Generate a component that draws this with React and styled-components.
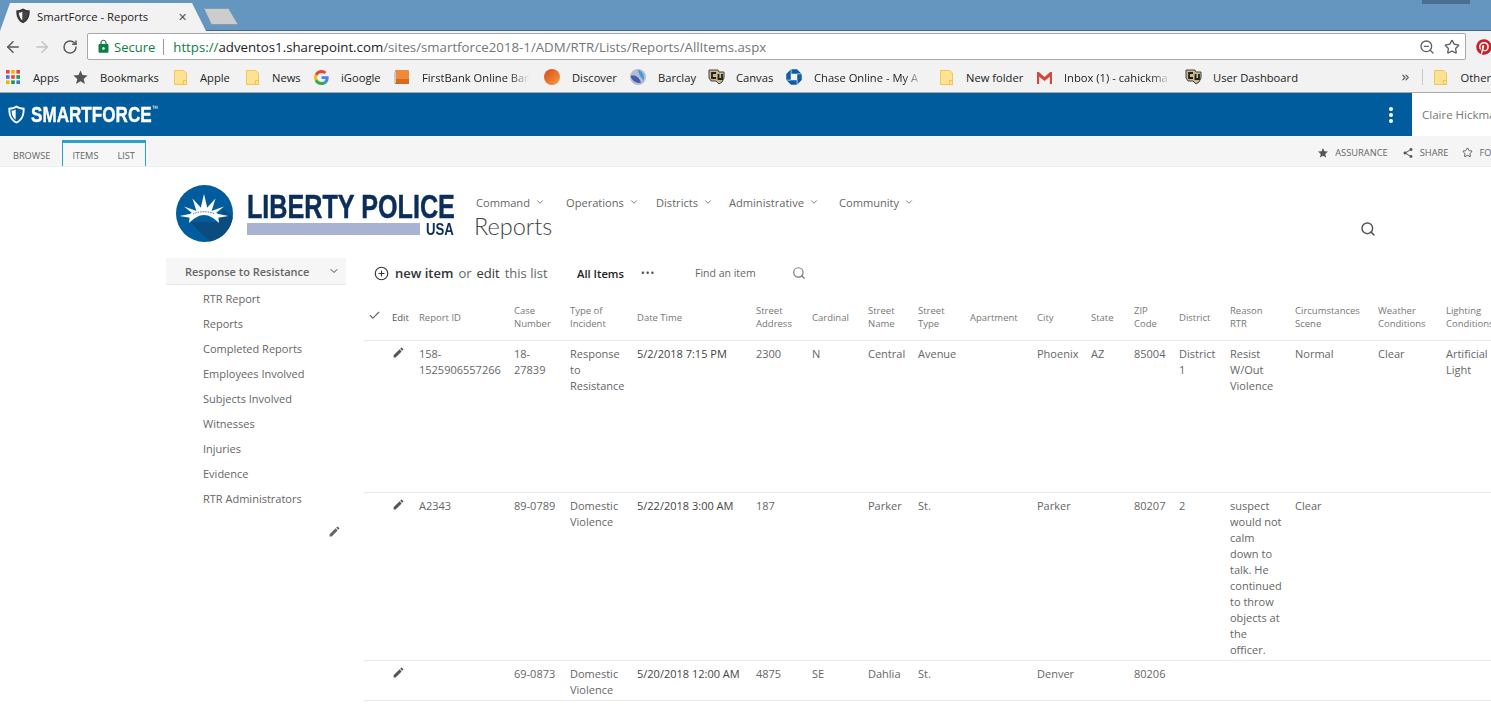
import React from "react";
import styled, { createGlobalStyle } from "styled-components";
import { ArrowLeft, ArrowRight, RotateCw, ZoomOut, Star, Search, Check, CirclePlus, ChevronDown, ChevronsRight } from "lucide-react";
import { MdEdit, MdShare, MdStar, MdLock } from "react-icons/md";
import { FaPinterest } from "react-icons/fa";

const UI_FONT = `"Open Sans", "Noto Sans", sans-serif`;

const Global = createGlobalStyle`
  html, body { margin: 0; padding: 0; background: #fff; }
  body { font-family: ${UI_FONT}; overflow: hidden; }
  * { box-sizing: border-box; }
  svg { flex: none; }
`;

const ShieldIcon = ({ size = 15, color = "#333", inner = "#fff", half = "#fff" }) => (
  <svg width={size} height={size * 1.12} viewBox="0 0 20 22">
    <path d="M10 .5 C13 2.500 16 3 19.500 3 C20 12 17 18.500 10 21.500 C3 18.500 0 12 .5 3 C4 3 7 2.500 10 .5 Z" fill={color} />
    <path d="M10 3 C7.500 4.500 5 5 2.700 5.200 C2.500 12 5 17 10 19.300 C15 17 17.500 12 17.300 5.200 C15 5 12.500 4.500 10 3 Z" fill={inner} />
    <path d="M9 5 C7.500 6 5.800 6.500 4.200 6.700 C4.200 11 6 15.500 9 17.300 Z" fill={half} />
  </svg>
);

const AppsIcon = () => (
  <svg width="14" height="14" viewBox="0 0 14 14">
    {["#e8453c", "#f4b400", "#e8453c", "#3c78d8", "#e8453c", "#0f9d58", "#f4b400", "#0f9d58", "#3c78d8"].map((c, i) => (
      <rect key={i} x={(i % 3) * 5.2} y={Math.floor(i / 3) * 5.2} width="3.6" height="3.6" fill={c} />
    ))}
  </svg>
);

const FolderIcon = () => (
  <svg width="13" height="15" viewBox="0 0 13 15">
    <path d="M.5.5 H9.500 L12.500 3 V14.500 H.5 Z" fill="#fde293" stroke="#f0c654" />
    <rect x="9.500" y="10.500" width="3" height="4" fill="#fde293" stroke="#f0c654" />
  </svg>
);

const GoogleIcon = () => (
  <svg width="15" height="15" viewBox="0 0 48 48">
    <path fill="#EA4335" d="M24 9.500c3.500 0 6.700 1.300 9.100 3.500l6.800-6.800C35.800 2.400 30.300 0 24 0 14.600 0 6.500 5.400 2.600 13.200l7.900 6.200C12.400 13.600 17.700 9.500 24 9.500z" />
    <path fill="#4285F4" d="M46.900 24.500c0-1.600-.2-3.100-.4-4.500H24v9h12.900c-.6 3-2.200 5.500-4.700 7.200l7.600 5.900c4.400-4.100 7.100-10.200 7.100-17.600z" />
    <path fill="#FBBC05" d="M10.500 28.600c-.5-1.500-.8-3-.8-4.600s.3-3.100.8-4.600l-7.900-6.200C.9 16.500 0 20.100 0 24s.9 7.500 2.600 10.800l7.900-6.200z" />
    <path fill="#34A853" d="M24 48c6.500 0 11.900-2.100 15.900-5.800l-7.600-5.900c-2.200 1.400-5 2.300-8.300 2.300-6.300 0-11.600-4.100-13.500-9.900l-7.900 6.200C6.500 42.600 14.600 48 24 48z" />
  </svg>
);

const OrangeBox = () => (
  <svg width="16" height="15" viewBox="0 0 16 15">
    <rect x="1" y="0" width="14" height="14" rx="1" fill="#f08a38" />
    <rect x="1" y="9" width="14" height="5" fill="#d86a20" />
    <rect x="0" y="2" width="2" height="11" fill="#c9c9c9" />
  </svg>
);

const DiscoverIcon = () => (
  <svg width="16" height="16" viewBox="0 0 16 16">
    <defs>
      <linearGradient id="disc" x1="0" y1="0" x2="1" y2="1">
        <stop offset="0" stopColor="#d8491c" />
        <stop offset="1" stopColor="#f6a03a" />
      </linearGradient>
    </defs>
    <circle cx="8" cy="8" r="8" fill="url(#disc)" />
  </svg>
);

const BarclayIcon = () => (
  <svg width="16" height="16" viewBox="0 0 16 16">
    <circle cx="8" cy="8" r="8" fill="#b9b9d2" />
    <path d="M.5 7 C5 5.500 9 8 11 13.500 C7 15 2 12 .5 7 Z" fill="#3f5fa8" />
    <path d="M8 .5 C12 2 15 6 13.500 11.500 C11 9 8.500 5 8 .5 Z" fill="#3aa0dc" />
  </svg>
);

const BuffaloIcon = () => (
  <svg width="17" height="16" viewBox="0 0 17 16">
    <path d="M1 1 H10 L11 3 H16 V9 L14 13 L11 15 L8 12 H3 L1 9 Z" fill="#c9b98a" stroke="#444" strokeWidth="1" />
    <path d="M8 4 H4 V9 H8 M10.500 5 V10 H14 V5" fill="none" stroke="#222" strokeWidth="1.800" />
  </svg>
);

const ChaseIcon = () => (
  <svg width="16" height="16" viewBox="0 0 16 16" fill="#0f5cab" stroke="#f2f2f2" strokeWidth=".5">
    <path d="M5 0 H11 L16 5 H5 Z" />
    <path d="M16 5 V11 L11 16 V5 Z" />
    <path d="M11 16 H5 L0 11 H11 Z" />
    <path d="M0 11 V5 L5 0 V11 Z" />
  </svg>
);

const GmailIcon = () => (
  <svg width="15" height="13" viewBox="0 0 15 13">
    <path d="M2.500 5 V13 H0 V1 Z M12.500 5 V13 H15 V1 Z" fill="#c9c9c9" />
    <path d="M0 1 H1.800 L7.500 6 L13.200 1 H15 V4 L7.500 10 L0 4 Z" fill="#d5473a" />
    <path d="M0 1 V13 H2 V3 Z M15 1 V13 H13 V3 Z" fill="#d5473a" />
  </svg>
);

const LibertyMark = () => (
  <svg width="57" height="57" viewBox="0 0 57 57">
    <circle cx="28.500" cy="28.500" r="28.500" fill="#005c9c" />
    <path d="M14 37 L34 56.400 A28.500 28.500 0 0 0 56.800 32 L47 24 L42 37 Z" fill="#0b4c7e" />
    <g fill="#fff">
      <path d="M28 9 L32 26 H24 Z" />
      <path d="M16.500 13.500 L27 25 L21 28 Z" />
      <path d="M39.500 13.500 L29 25 L35 28 Z" />
      <path d="M8 21.500 L22 26.500 L18.500 30 Z" />
      <path d="M48 21.500 L34 26.500 L37.500 30 Z" />
      <path d="M3.500 31 L16 28.500 L15.500 33 Z" />
      <path d="M52.500 31 L40 28.500 L40.500 33 Z" />
      <path d="M14 29 C21 24 35 24 42 29 L43 38 C38 33 33 30 28 30 C23 30 18 33 13 38 Z" />
    </g>
    <path d="M17 29 C23 26 33 26 39 29" fill="none" stroke="#005c9c" strokeWidth=".8" strokeDasharray="1.500 1" />
  </svg>
);

const bookmarks = [
  { icon: <AppsIcon />, label: "Apps", w: 27 },
  { icon: <MdStar size={17} color="#555" />, label: "Bookmarks", w: 60 },
  { icon: <FolderIcon />, label: "Apple", w: 32 },
  { icon: <FolderIcon />, label: "News", w: 29 },
  { icon: <GoogleIcon />, label: "iGoogle", w: 41 },
  { icon: <OrangeBox />, label: "FirstBank Online Ban", w: 110, fade: true },
  { icon: <DiscoverIcon />, label: "Discover", w: 46 },
  { icon: <BarclayIcon />, label: "Barclay", w: 38 },
  { icon: <BuffaloIcon />, label: "Canvas", w: 38 },
  { icon: <ChaseIcon />, label: "Chase Online - My A", w: 112, fade: true },
  { icon: <FolderIcon />, label: "New folder", w: 58 },
  { icon: <GmailIcon />, label: "Inbox (1) - cahickma", w: 109, fade: true },
  { icon: <BuffaloIcon />, label: "User Dashboard", w: 86 },
];

const navLinks = [
  { label: "Command", w: 90 },
  { label: "Operations", w: 90 },
  { label: "Districts", w: 73 },
  { label: "Administrative", w: 110 },
  { label: "Community" },
];
const sideLinks = ["RTR Report", "Reports", "Completed Reports", "Employees Involved", "Subjects Involved", "Witnesses", "Injuries", "Evidence", "RTR Administrators"];

const columns = [
  { w: 24 },
  { w: 27, title: "Edit", dark: true },
  { w: 95, title: "Report ID" },
  { w: 56, title: "Case Number" },
  { w: 67, title: "Type of Incident" },
  { w: 119, title: "Date Time" },
  { w: 56, title: "Street Address" },
  { w: 56, title: "Cardinal" },
  { w: 50, title: "Street Name" },
  { w: 52, title: "Street Type" },
  { w: 67, title: "Apartment" },
  { w: 54, title: "City" },
  { w: 43, title: "State" },
  { w: 45, title: "ZIP Code" },
  { w: 51, title: "District" },
  { w: 65, title: "Reason\nRTR" },
  { w: 83, title: "Circumstances Scene" },
  { w: 68, title: "Weather Conditions" },
  { w: 68, title: "Lighting Conditions" },
];

const rows = [
  { h: 152, cells: ["158-1525906557266", "18-27839", "Response to Resistance", "5/2/2018 7:15 PM", "2300", "N", "Central", "Avenue", "", "Phoenix", "AZ", "85004", "District 1", "Resist W/Out Violence", "Normal", "Clear", "Artificial Light"] },
  { h: 168, cells: ["A2343", "89-0789", "Domestic Violence", "5/22/2018 3:00 AM", "187", "", "Parker", "St.", "", "Parker", "", "80207", "2", "suspect would not calm down to talk. He continued to throw objects at the officer.", "Clear", "", ""] },
  { h: 40, cells: ["", "69-0873", "Domestic Violence", "5/20/2018 12:00 AM", "4875", "SE", "Dahlia", "St.", "", "Denver", "", "80206", "", "", "", "", ""] },
];

export default function App() {
  return (
    <Page>
      <Global />
      <TabStrip>
        <ActiveTab>
          <ShieldIcon size={14} color="#333" inner="#444" half="#f2f2f2" />
          <TabTitle>SmartForce - Reports</TabTitle>
          <TabClose>✕</TabClose>
        </ActiveTab>
        <NewTab />
        <WindowButton />
      </TabStrip>

      <Toolbar>
        <ArrowLeft size={18} color="#5a5a5a" strokeWidth={2} />
        <ArrowRight size={18} color="#c4c4c4" strokeWidth={2} />
        <RotateCw size={16} color="#5a5a5a" strokeWidth={2.2} />
        <Omnibox>
          <MdLock size={15} color="#0b8043" />
          <SecureLabel>Secure</SecureLabel>
          <UrlDivider />
          <Url>
            <UrlScheme>https://</UrlScheme>
            <UrlHost>adventos1.sharepoint.com</UrlHost>
            /sites/smartforce2018-1/ADM/RTR/Lists/Reports/AllItems.aspx
          </Url>
          <OmniIcons>
            <ZoomOut size={16} color="#5f5f5f" />
            <Star size={16} color="#5f5f5f" />
          </OmniIcons>
        </Omnibox>
        <FaPinterest size={16} color="#cb2027" />
      </Toolbar>

      <BookmarksBar>
        {bookmarks.map((b) => (
          <Bookmark key={b.label}>
            <BookmarkIcon>{b.icon}</BookmarkIcon>
            <BookmarkLabel $w={b.w} $fade={b.fade}>{b.label}</BookmarkLabel>
          </Bookmark>
        ))}
        <BookmarksEnd>
          <ChevronsRight size={11} color="#555" strokeWidth={2.500} />
          <BarDivider />
          <Bookmark>
            <BookmarkIcon><FolderIcon /></BookmarkIcon>
            <BookmarkLabel>Other</BookmarkLabel>
          </Bookmark>
        </BookmarksEnd>
      </BookmarksBar>

      <SuiteBar>
        <Brand>
          <ShieldIcon size={17} color="#fff" inner="#005c9c" half="#fff" />
          <BrandName>SMARTFORCE<sup>™</sup></BrandName>
        </Brand>
        <Kebab>
          <i /><i /><i />
        </Kebab>
        <UserBox>Claire Hickman</UserBox>
      </SuiteBar>

      <Ribbon>
        <RibbonTab>BROWSE</RibbonTab>
        <RibbonGroup>
          <RibbonTab $inGroup>ITEMS</RibbonTab>
          <RibbonTab $inGroup>LIST</RibbonTab>
        </RibbonGroup>
        <RibbonActions>
          <RibbonAction><MdStar size={12} />ASSURANCE</RibbonAction>
          <RibbonAction><MdShare size={12} />SHARE</RibbonAction>
          <RibbonAction><Star size={11} />FOLLOW</RibbonAction>
        </RibbonActions>
      </Ribbon>

      <SiteHeader>
        <Logo>
          <LibertyMark />
          <LogoWords>
            <LogoName>LIBERTY POLICE</LogoName>
            <LogoUnder>
              <LogoBar />
              <LogoUsa>USA</LogoUsa>
            </LogoUnder>
          </LogoWords>
        </Logo>
        <HeaderText>
          <TopNav>
            {navLinks.map((n) => (
              <TopNavLink key={n.label} $w={n.w}>{n.label}<ChevronDown size={10} /></TopNavLink>
            ))}
          </TopNav>
          <PageTitle>Reports</PageTitle>
        </HeaderText>
        <HeaderSearch><Search size={16} strokeWidth={2.2} /></HeaderSearch>
      </SiteHeader>

      <Body>
        <SideNav>
          <SideHeading>Response to Resistance<ChevronDown size={12} /></SideHeading>
          {sideLinks.map((s) => <SideLink key={s}>{s}</SideLink>)}
          <SideEdit><MdEdit size={13} /></SideEdit>
        </SideNav>

        <Main>
          <ListToolbar>
            <NewItem>
              <CirclePlus size={15} strokeWidth={1.8} color="#333" />
              <strong>new item</strong> <span>or</span> <b>edit</b> <span>this list</span>
            </NewItem>
            <ViewName>All Items</ViewName>
            <Dots>•••</Dots>
            <FindLabel>Find an item</FindLabel>
            <Search size={14} color="#777" />
          </ListToolbar>

          <ListTable>
            <colgroup>
              {columns.map((c, i) => <col key={i} width={c.w} />)}
            </colgroup>
            <thead>
              <tr>
                {columns.map((c, i) => (
                  <HeadCell key={i} $dark={c.dark}>
                    {i === 0 ? <Check size={13} color="#666" /> : c.title}
                  </HeadCell>
                ))}
              </tr>
            </thead>
            <tbody>
              {rows.map((r, ri) => (
                <Row key={ri} $h={r.h}>
                  <Cell />
                  <Cell><MdEdit size={13} color="#555" /></Cell>
                  {r.cells.map((c, ci) => <Cell key={ci} $dark={ci === 3}>{c}</Cell>)}
                </Row>
              ))}
            </tbody>
          </ListTable>
        </Main>
      </Body>
    </Page>
  );
}

const Page = styled.div`
  width: 1491px;
  height: 711px;
  overflow: hidden;
  background: #fff;
`;

const TabStrip = styled.div`
  height: 31px;
  background: #6596bf;
  border-bottom: 1px solid #45688a;
  display: flex;
  align-items: flex-end;
  position: relative;
`;

const ActiveTab = styled.div`
  width: 206px;
  height: 28px;
  margin-bottom: -1px;
  background: #f2f2f2;
  clip-path: polygon(0 100%, 10px 0, 192px 0, 206px 100%);
  display: flex;
  align-items: center;
  padding: 0 0 2px 16px;
`;

const TabTitle = styled.span`
  font-size: 11.300px;
  color: #222;
  margin-left: 7px;
  width: 141px;
`;

const TabClose = styled.span`
  font-size: 11px;
  color: #555;
`;

const NewTab = styled.div`
  width: 34px;
  height: 17px;
  margin: 0 0 5px -2px;
  background: #cdcdcd;
  border: 1px solid #8b9aa8;
  clip-path: polygon(0 0, 24px 0, 100% 100%, 8px 100%);
`;

const WindowButton = styled.div`
  position: absolute;
  top: 0;
  left: 1422px;
  width: 48px;
  height: 4px;
  background: #4a6e90;
`;

const Toolbar = styled.div`
  height: 31px;
  background: #f2f2f2;
  display: flex;
  align-items: center;
  gap: 11px;
  padding: 0 0 0 4px;
`;

const Omnibox = styled.div`
  width: 1379px;
  flex: none;
  height: 27px;
  margin-left: -2px;
  margin-right: -1px;
  background: #fff;
  border: 1px solid #a9a9a9;
  border-radius: 2px;
  display: flex;
  align-items: center;
  padding-left: 8px;
`;

const SecureLabel = styled.span`
  font-size: 13px;
  color: #0b8043;
  margin-left: 3px;
`;

const UrlDivider = styled.span`
  width: 1px;
  height: 16px;
  background: #999;
  margin: 0 9px 0 8px;
`;

const Url = styled.span`
  font-size: 13.250px;
  color: #767676;
  flex: 1;
`;

const UrlScheme = styled.span`
  color: #0b8043;
`;

const UrlHost = styled.span`
  color: #222;
`;

const OmniIcons = styled.span`
  display: inline-flex;
  gap: 9px;
  margin-right: 5px;
`;

const BookmarksBar = styled.div`
  height: 31px;
  background: #f2f2f2;
  border-bottom: 1px solid #a8a8a8;
  display: flex;
  align-items: center;
  gap: 13px;
  padding-left: 6px;
`;

const Bookmark = styled.div`
  display: flex;
  align-items: center;
  gap: 13px;
`;

const BookmarkIcon = styled.span`
  width: 14px;
  flex: none;
  display: inline-flex;
  align-items: center;
  justify-content: center;
`;

const BookmarkLabel = styled.span`
  font-size: 11.200px;
  color: #222;
  white-space: nowrap;
  width: ${(p) => (p.$w ? `${p.$w}px` : "auto")};
  ${(p) => p.$fade && "mask-image: linear-gradient(to right, #000 80%, transparent 98%);"}
`;

const BookmarksEnd = styled.div`
  margin-left: auto;
  display: flex;
  align-items: center;
  gap: 11px;
`;

const BarDivider = styled.span`
  width: 1px;
  height: 16px;
  background: #c8c8c8;
`;

const SuiteBar = styled.div`
  height: 43px;
  background: #005c9c;
  display: flex;
  align-items: center;
  padding-left: 8px;
`;

const Brand = styled.div`
  display: flex;
  align-items: center;
  gap: 6px;
  flex: 1;
`;

const BrandName = styled.span`
  font-family: "Liberation Sans", sans-serif;
  font-weight: 700;
  font-size: 22.500px;
  color: #fff;
  display: inline-block;
  -webkit-text-stroke: 0.4px #fff;
  transform: scaleX(0.76);
  transform-origin: left center;
  sup {
    font-size: 8px;
    font-weight: 400;
    -webkit-text-stroke: 0;
    vertical-align: 11px;
    line-height: 0;
  }
`;

const Kebab = styled.div`
  width: 6px;
  margin-right: 18px;
  display: flex;
  flex-direction: column;
  align-items: center;
  gap: 2px;
  i {
    width: 4px;
    height: 4px;
    border-radius: 50%;
    background: #fff;
  }
`;

const UserBox = styled.div`
  width: 79px;
  height: 43px;
  background: #fff;
  color: #777;
  font-size: 11.500px;
  line-height: 43px;
  padding-left: 10px;
  white-space: nowrap;
  overflow: hidden;
`;

const Ribbon = styled.div`
  height: 31px;
  background: #f5f5f5;
  border-bottom: 1px solid #ececec;
  display: flex;
  align-items: flex-end;
  padding-left: 13px;
`;

const RibbonTab = styled.span`
  font-size: 9.200px;
  color: #666;
  height: 23px;
  line-height: 26px;
  margin-right: ${(p) => (p.$inGroup ? "1px" : "11px")};
  padding: ${(p) => (p.$inGroup ? "0 9px" : "0")};
`;

const RibbonGroup = styled.div`
  display: flex;
  height: 26px;
  margin-left: 1px;
  border: 1px solid #29a2cc;
  border-top-width: 3px;
  border-bottom: none;
  background: #f7f7f7;
`;

const RibbonActions = styled.div`
  margin-left: auto;
  display: flex;
  align-items: center;
  gap: 14px;
  height: 100%;
  padding-top: 3px;
  margin-right: -26px;
`;

const RibbonAction = styled.span`
  display: inline-flex;
  align-items: center;
  gap: 6px;
  font-size: 9.300px;
  color: #666;
  svg { color: #555; }
`;

const SiteHeader = styled.div`
  height: 88px;
  padding: 18px 0 0 176px;
  display: flex;
  align-items: flex-start;
`;

const Logo = styled.div`
  display: flex;
  align-items: flex-start;
  gap: 14px;
  width: 296px;
`;

const LogoWords = styled.div`
  width: 208px;
  display: flex;
  flex-direction: column;
  padding-top: 7px;
`;

const LogoName = styled.span`
  font-family: "Liberation Sans", sans-serif;
  font-weight: 700;
  font-size: 34px;
  line-height: 28px;
  color: #0b2d5a;
  white-space: nowrap;
  display: inline-block;
  -webkit-text-stroke: 0.5px #0b2d5a;
  transform: scaleX(0.74);
  transform-origin: left center;
`;

const LogoUnder = styled.div`
  display: flex;
  align-items: center;
  gap: 6px;
  margin-top: 3px;
`;

const LogoBar = styled.span`
  width: 173px;
  flex: none;
  height: 12px;
  background: #aab2d1;
`;

const LogoUsa = styled.span`
  font-family: "Liberation Sans", sans-serif;
  font-weight: 700;
  font-size: 16.500px;
  line-height: 12px;
  color: #0b2d5a;
  display: inline-block;
  white-space: nowrap;
  transform: scaleX(0.8);
  transform-origin: left center;
`;

const HeaderText = styled.div`
  display: flex;
  flex-direction: column;
  margin-left: 2px;
`;

const TopNav = styled.div`
  display: flex;
  height: 32px;
  padding-top: 2px;
  align-items: center;
  margin-left: 2px;
`;

const TopNavLink = styled.span`
  display: inline-flex;
  align-items: center;
  gap: 5px;
  width: ${(p) => (p.$w ? `${p.$w}px` : "auto")};
  font-size: 11.100px;
  color: #666;
`;

const PageTitle = styled.h1`
  margin: -5px 0 0;
  font-family: Lato, "Open Sans", sans-serif;
  font-size: 23.500px;
  font-weight: 300;
  line-height: 28px;
  color: #444;
`;

const HeaderSearch = styled.div`
  margin-left: auto;
  margin-right: 115px;
  margin-top: 35px;
  color: #555;
`;

const Body = styled.div`
  display: flex;
  padding: 3px 0 0 166px;
`;

const SideNav = styled.nav`
  width: 180px;
  margin-right: 18px;
  flex: none;
  display: flex;
  flex-direction: column;
`;

const SideHeading = styled.div`
  height: 27px;
  background: #f6f6f6;
  border-bottom: 1px solid #e8e8e8;
  padding: 0 6px 0 19px;
  font-size: 11px;
  font-weight: 600;
  color: #666;
  display: flex;
  align-items: center;
  justify-content: space-between;
  margin-bottom: 1px;
  svg { color: #444; }
`;

const SideLink = styled.div`
  height: 25px;
  line-height: 25px;
  padding-left: 37px;
  font-size: 11px;
  color: #666;
`;

const SideEdit = styled.div`
  align-self: flex-end;
  margin: 10px 5px 0 0;
  color: #666;
`;

const Main = styled.main`
  flex: none;
  width: 1146px;
`;

const ListToolbar = styled.div`
  height: 30px;
  display: flex;
  align-items: center;
  padding-left: 10px;
`;

const NewItem = styled.div`
  width: 203px;
  display: inline-flex;
  align-items: center;
  gap: 5px;
  font-size: 13px;
  color: #666;
  white-space: nowrap;
  strong { font-weight: 600; color: #333; margin-left: 1px; }
  b { font-weight: 400; color: #333; }
`;

const ViewName = styled.span`
  width: 64px;
  font-size: 11.200px;
  font-weight: 600;
  color: #222;
`;

const Dots = styled.span`
  width: 54px;
  font-size: 10px;
  letter-spacing: 1px;
  color: #444;
`;

const FindLabel = styled.span`
  width: 97px;
  font-size: 10.500px;
  color: #666;
`;

const ListTable = styled.table`
  table-layout: fixed;
  width: 1146px;
  margin-top: 10px;
  border-collapse: collapse;
`;

const HeadCell = styled.th`
  height: 42px;
  padding: 0 7px 3px 4px;
  font-size: 9.500px;
  line-height: 13px;
  font-weight: 400;
  text-align: left;
  white-space: pre-line;
  color: ${(p) => (p.$dark ? "#555" : "#777")};
  border-bottom: 1px solid #e8e8e8;
`;

const Row = styled.tr`
  height: ${(p) => p.$h}px;
  border-bottom: 1px solid #e8e8e8;
`;

const Cell = styled.td`
  vertical-align: top;
  padding: 5px 7px 0 4px;
  font-size: 11px;
  line-height: 16px;
  color: ${(p) => (p.$dark ? "#444" : "#666")};
`;
